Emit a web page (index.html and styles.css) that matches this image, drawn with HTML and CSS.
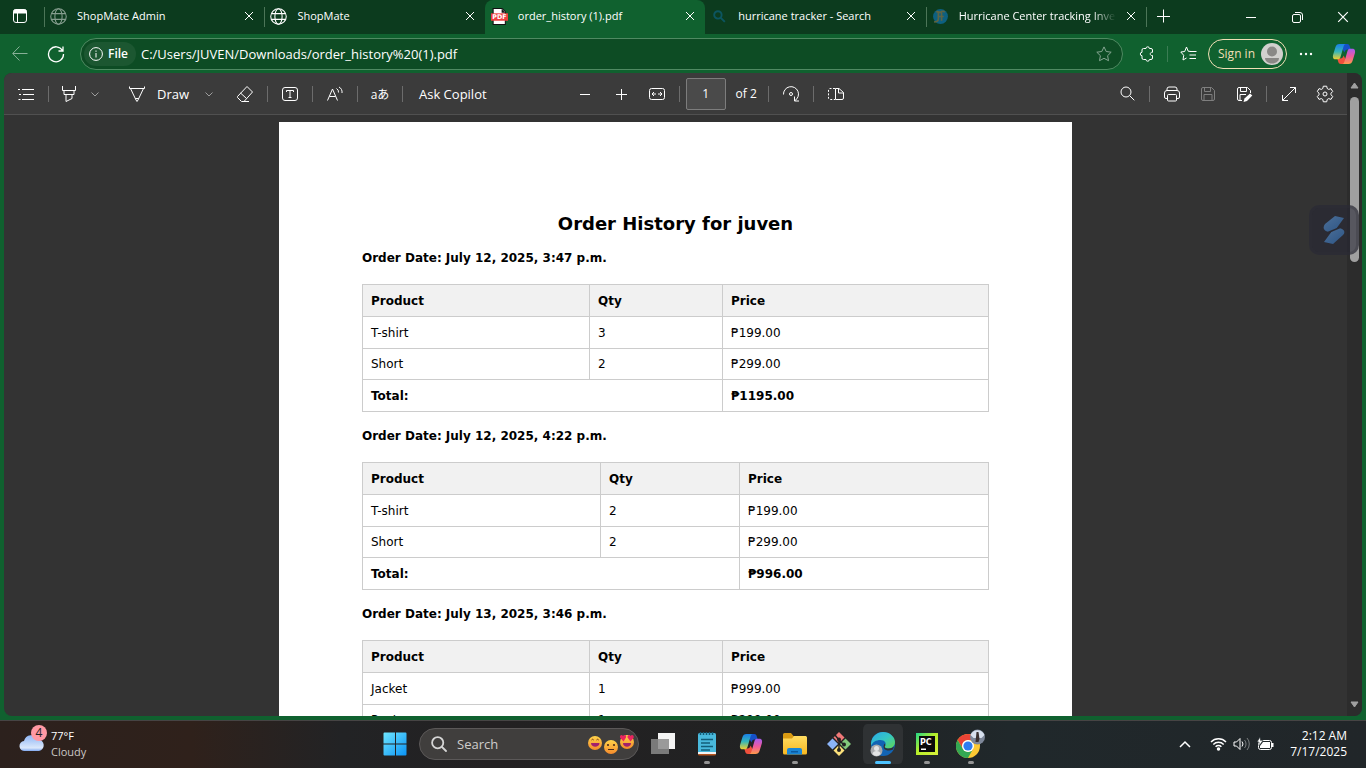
FILE: index.html
```html
<!DOCTYPE html>
<html lang="en">
<head>
<meta charset="utf-8">
<title>order_history (1).pdf</title>
<link rel="stylesheet" href="styles.css">
</head>
<body>
<svg class="defs" aria-hidden="true">
  <defs>
    <symbol id="x" viewBox="0 0 10 10"><path d="M1 1l8 8M9 1l-8 8"/></symbol>
    <symbol id="chev" viewBox="0 0 8 8"><path d="M.5 2.500L4 6l3.500-3.500"/></symbol>
    <symbol id="globe" viewBox="0 0 16 16"><circle cx="8" cy="8" r="7.300"/><ellipse cx="8" cy="8" rx="3.400" ry="7.300"/><path d="M1.500 5.300h13M1.500 10.700h13"/></symbol>
    <linearGradient id="cpA" x1="0" y1="0" x2="0" y2="1"><stop offset="0" stop-color="#1a7fe8"/><stop offset=".5" stop-color="#35b6b8"/><stop offset="1" stop-color="#f2cf2e"/></linearGradient>
    <linearGradient id="cpB" x1="0" y1="0" x2="0" y2="1"><stop offset="0" stop-color="#a65cf0"/><stop offset=".5" stop-color="#ee5a9c"/><stop offset="1" stop-color="#ff9a4a"/></linearGradient>
    <symbol id="copilot" viewBox="0 0 24 24">
      <path fill="#1550c8" d="M8 2h7c2 0 2.500 1 3 3l.7 2.500h-3c-2 0-2.700 1-3.300 3L10 6z"/>
      <path fill="#f0503c" d="M16 22H9c-2 0-2.500-1-3-3l-.7-2.500h3c2 0 2.700-1 3.300-3L14 18z"/>
      <path fill="url(#cpA)" d="M7.500 2H14c-1.500 0-2 1-2.600 3L8.500 15c-.5 1.700-1.200 2.300-3 2.300H3.500C1 17.300.5 15 1.200 12.500L3.500 5C4.200 3 5.200 2 7.500 2z"/>
      <path fill="url(#cpB)" d="M16.500 22H10c1.500 0 2-1 2.600-3l2.900-10c.5-1.700 1.200-2.300 3-2.300h2c2.500 0 3 2.300 2.300 4.800L20.500 19c-.7 2-1.700 3-4 3z"/>
    </symbol>
    <linearGradient id="winG" x1="0" y1="0" x2="1" y2="1"><stop offset="0" stop-color="#6fe6ff"/><stop offset="1" stop-color="#0a93f5"/></linearGradient>
    <linearGradient id="edgeA" x1="0" y1="0" x2="1" y2="1"><stop offset="0" stop-color="#2aa8e8"/><stop offset=".5" stop-color="#35c6c4"/><stop offset="1" stop-color="#62d84e"/></linearGradient>
    <linearGradient id="cloudG" x1="0" y1="0" x2="0" y2="1"><stop offset="0" stop-color="#8fb6f5"/><stop offset=".8" stop-color="#dbe8fb"/><stop offset="1" stop-color="#7fa8f0"/></linearGradient>
    <linearGradient id="folderG" x1="0" y1="0" x2="0" y2="1"><stop offset="0" stop-color="#ffdc62"/><stop offset="1" stop-color="#f8b820"/></linearGradient>
    <linearGradient id="pcG" x1="0" y1="0" x2="1" y2="1"><stop offset="0" stop-color="#21d789"/><stop offset=".45" stop-color="#b6ee2a"/><stop offset="1" stop-color="#d8f03a"/></linearGradient>
    <linearGradient id="faceG" x1="0" y1="0" x2="0" y2="1"><stop offset="0" stop-color="#ffd34a"/><stop offset="1" stop-color="#f58a2c"/></linearGradient>
    <linearGradient id="snG" x1="0" y1="0" x2="1" y2="1"><stop offset="0" stop-color="#4d7099"/><stop offset="1" stop-color="#2c5484"/></linearGradient>
  </defs>
</svg>

<header class="tabstrip">
  <button class="tab-actions" aria-label="Tab actions"><svg class="ico" width="16" height="16" viewBox="0 0 16 16"><rect x="1.500" y="1.500" width="13" height="13" rx="2.500"/><path fill="currentColor" d="M2 2h12v3H2z"/><path d="M5.500 5v9"/></svg></button>
  <nav class="tabs">
    <div class="tab"><svg class="ico fav dim" viewBox="0 0 16 16"><use href="#globe"/></svg><a href="#">ShopMate Admin</a><button class="close" aria-label="Close tab"><svg class="ico" width="10" height="10"><use href="#x"/></svg></button></div>
    <div class="tab"><svg class="ico fav" viewBox="0 0 16 16"><use href="#globe"/></svg><a href="#">ShopMate</a><button class="close" aria-label="Close tab"><svg class="ico" width="10" height="10"><use href="#x"/></svg></button></div>
    <div class="tab active"><svg class="fav" viewBox="0 0 16 16"><path fill="#fff" stroke="#111" d="M2 .5h8.500l3 3v12H2z"/><path fill="#111" d="M10 1l3.500 3.500H10z"/><path fill="#ee3f3f" d="M0 5h16v7H0z"/><text x="8" y="10.500" class="pdf-label">PDF</text></svg><a href="#">order_history (1).pdf</a><button class="close" aria-label="Close tab"><svg class="ico" width="10" height="10"><use href="#x"/></svg></button></div>
    <div class="tab"><svg class="fav" viewBox="0 0 16 16"><g fill="none" stroke="#0c5560" stroke-width="1.800"><circle cx="6.500" cy="6.500" r="3.500"/><path d="M9 9l4 4"/></g></svg><a href="#">hurricane tracker - Search</a><button class="close" aria-label="Close tab"><svg class="ico" width="10" height="10"><use href="#x"/></svg></button></div>
    <div class="tab"><svg class="fav" viewBox="0 0 16 16"><circle cx="8" cy="8" r="7" fill="#0d6080"/><path d="M4 4c2-2 3 1 4 0s3-1 4 0M6 4v6c0 3-3 3-4 3M9 4v8M6 8h5" fill="none" stroke="#5d6444" stroke-width="1.600"/></svg><a href="#" class="fade">Hurricane Center tracking Inve</a><button class="close" aria-label="Close tab"><svg class="ico" width="10" height="10"><use href="#x"/></svg></button></div>
  </nav>
  <button class="newtab" aria-label="New tab"><svg class="ico" width="14" height="14" viewBox="0 0 14 14"><path d="M7.500 .5v13M1 7.500h13"/></svg></button>
  <div class="winctl">
    <button aria-label="Minimize"><svg class="ico" width="10" height="10" viewBox="0 0 10 10"><path d="M0 5.500h10"/></svg></button>
    <button aria-label="Restore"><svg class="ico" width="11" height="11" viewBox="0 0 11 11"><rect x=".5" y="2.500" width="8" height="8" rx="1.500"/><path d="M3 .5h5a2.500 2.500 0 0 1 2.500 2.500v5"/></svg></button>
    <button aria-label="Close"><svg class="ico" width="12" height="12"><use href="#x"/></svg></button>
  </div>
</header>

<div class="addressbar">
  <button class="nav-btn dim" aria-label="Back"><svg class="ico" width="16" height="16" viewBox="0 0 16 16"><path d="M15.500 7.500H1M7.500 .5L.7 7.500l6.800 7"/></svg></button>
  <button class="nav-btn" aria-label="Refresh"><svg class="ico thick" width="18" height="18" viewBox="0 0 18 18"><path d="M15.500 5.500A7.500 7.500 0 1 0 16.500 9M16 1.500v4.500h-4.500"/></svg></button>
  <div class="omnibox">
    <button class="chip"><svg class="ico" width="14" height="14" viewBox="0 0 14 14"><circle cx="7" cy="7" r="6.400"/><path d="M7 6v4.500M7 3.500v1.300"/></svg>File</button>
    <input class="url" aria-label="Address" value="C:/Users/JUVEN/Downloads/order_history%20(1).pdf">
    <button class="star dim" aria-label="Add to favorites"><svg class="ico" width="16" height="16" viewBox="0 0 16 16"><path d="M8 .9l2.200 4.600 5 .7-3.600 3.500.9 5L8 12.300 3.500 14.700l.9-5L.8 6.200l5-.7z"/></svg></button>
  </div>
  <button class="nav-btn" aria-label="Extensions"><svg class="ico" width="16" height="16" viewBox="0 0 16 16"><path d="M4.500 2.500H7a1.700 1.700 0 0 1 3.400 0H12a1.500 1.500 0 0 1 1.500 1.500v2.300c-3-.5-3 3.700 0 3.200V12a1.500 1.500 0 0 1-1.500 1.500h-1.600a1.700 1.700 0 0 1-3.400 0H4.500A1.500 1.500 0 0 1 3 12V9.700a1.700 1.700 0 0 1 0-3.400V4a1.500 1.500 0 0 1 1.500-1.500z"/></svg></button>
  <span class="vsep"></span>
  <button class="nav-btn" aria-label="Favorites"><svg class="ico" width="17" height="16" viewBox="0 0 17 16"><path d="M11 5.500L8.200 5.200 6.500 1 4.700 5.500.8 6 3.700 9.300 3 14l3.500-2M10 5.500h6.500M9.500 9H16M9.500 12.500H16"/></svg></button>
  <button class="signin">Sign in<svg width="22" height="22" viewBox="0 0 22 22"><circle cx="11" cy="11" r="11" fill="#d2d0ce"/><circle cx="11" cy="8.500" r="5" fill="#8a8886"/><path fill="#8a8886" d="M4 15h14c0 3-3 5.500-7 5.500S4 18 4 15z"/></svg></button>
  <button class="nav-btn more" aria-label="More"><svg width="14" height="4" viewBox="0 0 14 4" fill="#fff"><circle cx="2" cy="2" r="1.200"/><circle cx="7" cy="2" r="1.200"/><circle cx="12" cy="2" r="1.200"/></svg></button>
  <button class="copilot-btn" aria-label="Copilot"><svg width="24" height="24"><use href="#copilot"/></svg></button>
</div>

<main class="viewer">
  <div class="pane">
    <div class="toolbar">
      <button class="tool" aria-label="Contents"><svg class="ico" width="18" height="12" viewBox="0 0 18 12"><path d="M1 1.500h2M5 1.500h12M2 6.500h2M6 6.500h11M5 11.500h12M1.500 11.500h2"/></svg></button>
      <span class="sep"></span>
      <button class="tool combo" aria-label="Highlight"><svg class="ico" width="16" height="18" viewBox="0 0 16 18"><path d="M1.500 1v4.500h13V1M3 5.500v4h10v-4M5 9.500v7l6-3v-4"/></svg><svg class="ico dim" width="8" height="8"><use href="#chev"/></svg></button>
      <button class="tool draw"><svg class="ico" width="18" height="18" viewBox="0 0 18 18"><path d="M1.500 1.500v2h15v-2M2.500 3.500L8 15l1 1.500 1-1.500 5.500-11.500M7.300 13.500h3.400"/></svg><span>Draw</span><svg class="ico dim" width="8" height="8"><use href="#chev"/></svg></button>
      <button class="tool" aria-label="Erase"><svg class="ico" width="18" height="18" viewBox="0 0 18 18"><path d="M11 1.500L16.500 7 8 16.500H5.500l-4-4v-1zM4.500 8l6 5.500M8 16.500h5"/></svg></button>
      <span class="sep"></span>
      <button class="tool" aria-label="Add text"><svg class="ico" width="18" height="16" viewBox="0 0 18 16"><rect x="1.500" y="1.500" width="15" height="13" rx="2.500"/><path d="M5.500 6V4.500h7V6M9 4.500v7M7.500 11.500h3"/></svg></button>
      <span class="sep"></span>
      <button class="tool" aria-label="Read aloud"><svg class="ico" width="18" height="16" viewBox="0 0 18 16"><path d="M1.500 14.500L6.500 3l5 11.500M3.500 10.500h6M10.500 2.500a4 4 0 0 1 2 4M13 1a6 6 0 0 1 3 6"/></svg></button>
      <span class="sep"></span>
      <button class="tool translate" aria-label="Translate">aあ</button>
      <span class="sep"></span>
      <button class="tool ask">Ask Copilot</button>
      <div class="middle">
        <button class="tool" aria-label="Zoom out"><svg class="ico" width="12" height="12" viewBox="0 0 12 12"><path d="M1 6.500h10"/></svg></button>
        <button class="tool" aria-label="Zoom in"><svg class="ico" width="12" height="12" viewBox="0 0 12 12"><path d="M6.500 1v11M1 6.500h11"/></svg></button>
        <button class="tool" aria-label="Fit to width"><svg class="ico" width="18" height="14" viewBox="0 0 18 14"><rect x="1.500" y="1.500" width="15" height="11" rx="2"/><path d="M4 7h4M10 7h4M6 5L4 7l2 2M12 5l2 2-2 2"/></svg></button>
        <span class="sep"></span>
        <label class="page-no"><input value="1" aria-label="Page number"><span>of 2</span></label>
        <span class="sep"></span>
        <button class="tool" aria-label="Rotate"><svg class="ico" width="18" height="18" viewBox="0 0 18 18"><path d="M1.500 9.500A7.500 7.500 0 1 1 13 15.500M12.500 11.500v4.500h4.500"/><circle cx="9" cy="9" r="1.500"/></svg></button>
        <span class="sep"></span>
        <button class="tool" aria-label="Page view"><svg class="ico" width="18" height="14" viewBox="0 0 18 14"><path d="M8.500 1.500H12l4.500 4v5.500a1.500 1.500 0 0 1-1.500 1.500H8.500zM11.500 1.500v4.500h5"/><path stroke-dasharray="2 1.500" d="M8 1.500H3A1.500 1.500 0 0 0 1.500 3v8A1.500 1.500 0 0 0 3 12.500h5"/></svg></button>
      </div>
      <div class="right">
        <button class="tool" aria-label="Find"><svg class="ico" width="15" height="15" viewBox="0 0 15 15"><circle cx="6" cy="6" r="5"/><path d="M9.700 9.700l4.600 4.600"/></svg></button>
        <span class="sep"></span>
        <button class="tool" aria-label="Print"><svg class="ico" width="18" height="16" viewBox="0 0 18 16"><path d="M4 4.500V3a2 2 0 0 1 2-2h6a2 2 0 0 1 2 2v1.500M4 12.500H3A1.500 1.500 0 0 1 1.500 11V7A2.500 2.500 0 0 1 4 4.500h10A2.500 2.500 0 0 1 16.500 7v4a1.500 1.500 0 0 1-1.500 1.500h-1"/><rect x="4.500" y="8.500" width="9" height="6.500" rx="1"/></svg></button>
        <button class="tool faint" aria-label="Save"><svg class="ico" width="16" height="16" viewBox="0 0 16 16"><path d="M3 1.500h8.500L14.500 4.500V13a1.500 1.500 0 0 1-1.500 1.500H3A1.500 1.500 0 0 1 1.500 13V3A1.500 1.500 0 0 1 3 1.500zM4.500 1.500v4h6v-4M4 14.500v-6h8v6"/></svg></button>
        <button class="tool" aria-label="Save as"><svg class="ico" width="17" height="16" viewBox="0 0 17 16"><path d="M6 14.500H3A1.500 1.500 0 0 1 1.500 13V3A1.500 1.500 0 0 1 3 1.500h8.500l3 3V7M4.500 1.500v4h6v-4M4 14.500v-6h6"/><path fill="currentColor" stroke="none" d="M14 7.500l2.300 2-5.300 5.500-3.500 1 1-3.500z"/></svg></button>
        <span class="sep"></span>
        <button class="tool" aria-label="Full screen"><svg class="ico" width="16" height="16" viewBox="0 0 16 16"><path d="M1.500 14.500l13-13M9 1.500h5.500V7M1.500 9v5.500H7"/></svg></button>
        <button class="tool" aria-label="Settings"><svg class="ico" width="18" height="18" viewBox="0 0 18 18"><path d="M7.300 1.200h3.400l.5 2.300 1.500.9 2.300-.8 1.700 2.900L15 8.200v1.600l1.700 1.700-1.700 2.900-2.300-.8-1.500.9-.5 2.300H7.300l-.5-2.300-1.500-.9-2.300.8-1.700-2.900L3 9.800V8.200L1.300 6.500 3 3.600l2.300.8 1.500-.9z"/><circle cx="9" cy="9" r="2"/></svg></button>
      </div>
    </div>
    <div class="canvas">
      <article class="page">
        <h1>Order History for juven</h1>
        <h2>Order Date: July 12, 2025, 3:47 p.m.</h2>
        <table>
          <colgroup><col class="c-product"><col class="c-qty"><col></colgroup>
          <thead><tr><th>Product</th><th>Qty</th><th>Price</th></tr></thead>
          <tbody>
            <tr><td>T-shirt</td><td>3</td><td>₱199.00</td></tr>
            <tr><td>Short</td><td>2</td><td>₱299.00</td></tr>
            <tr class="total"><td colspan="2">Total:</td><td>₱1195.00</td></tr>
          </tbody>
        </table>
        <h2>Order Date: July 12, 2025, 4:22 p.m.</h2>
        <table>
          <colgroup><col class="c-product-wide"><col class="c-qty-wide"><col></colgroup>
          <thead><tr><th>Product</th><th>Qty</th><th>Price</th></tr></thead>
          <tbody>
            <tr><td>T-shirt</td><td>2</td><td>₱199.00</td></tr>
            <tr><td>Short</td><td>2</td><td>₱299.00</td></tr>
            <tr class="total"><td colspan="2">Total:</td><td>₱996.00</td></tr>
          </tbody>
        </table>
        <h2>Order Date: July 13, 2025, 3:46 p.m.</h2>
        <table>
          <colgroup><col class="c-product"><col class="c-qty"><col></colgroup>
          <thead><tr><th>Product</th><th>Qty</th><th>Price</th></tr></thead>
          <tbody>
            <tr><td>Jacket</td><td>1</td><td>₱999.00</td></tr>
            <tr><td>Pants</td><td>1</td><td>₱299.00</td></tr>
          </tbody>
        </table>
      </article>
    </div>
  </div>
  <div class="scroll">
    <svg width="9" height="7" viewBox="0 0 9 7"><path fill="#a0a0a0" stroke="#a0a0a0" stroke-linejoin="round" d="M4.500 1l3.500 5H1z"/></svg>
    <div class="track"><div class="thumb"></div></div>
    <svg width="9" height="7" viewBox="0 0 9 7"><path fill="#a0a0a0" stroke="#a0a0a0" stroke-linejoin="round" d="M4.500 6L1 1h7z"/></svg>
  </div>
  <button class="sidekick" aria-label="Assistant"><svg width="22" height="30" viewBox="0 0 22 30"><path fill="url(#snG)" d="M12 1l9 2-8 11c-1 2-3 3-5 3-7 0-9-4-6-8z"/><path fill="url(#snG)" d="M10 29l-9-2 8-11c1-2 3-3 5-3 7 0 9 4 6 7z"/><path d="M4 18L18 12" stroke="#292a33" stroke-width="1.500"/></svg></button>
</main>

<footer class="taskbar">
  <button class="weather">
    <span class="cloud"><svg width="26" height="18" viewBox="0 0 26 18"><path fill="url(#cloudG)" d="M6 17a5 5 0 0 1-1-10 7.500 7.500 0 0 1 14-1.500A5.800 5.800 0 0 1 20 17z"/></svg><b>4</b></span>
    <span class="wtext"><strong>77°F</strong><span>Cloudy</span></span>
  </button>
  <div class="apps">
    <button class="app" aria-label="Start"><svg width="24" height="24" viewBox="0 0 24 24"><path fill="url(#winG)" d="M1.500.5H12v11H.5v-10a1 1 0 0 1 1-1zM13 .5h9.500a1 1 0 0 1 1 1v10H13zM.5 12.500H12v11H1.500a1 1 0 0 1-1-1zM13 12.500h10.500v10a1 1 0 0 1-1 1H13z"/></svg></button>
    <label class="search"><svg width="16" height="16" viewBox="0 0 16 16" fill="none" stroke="#d5d5d5" stroke-width="1.800"><circle cx="6.700" cy="6.700" r="5.600"/><path stroke-linecap="round" d="M11 11l4 4"/></svg><input placeholder="Search" aria-label="Search">
      <svg width="46" height="20" viewBox="0 0 46 20">
        <circle cx="7" cy="9" r="7" fill="url(#faceG)"/><path fill="#a3206c" d="M3 9h8.500c0 5-8.500 5-8.500 0z"/><path d="M3.500 6q1-1.500 2.200 0M8.500 6q1-1.500 2.200 0" stroke="#6b3518" fill="none"/>
        <circle cx="23" cy="13" r="7" fill="url(#faceG)"/><circle cx="20" cy="11" r="1.100" fill="#4a2a18"/><circle cx="26" cy="11" r="1.100" fill="#4a2a18"/><path d="M20 15.500h6" stroke="#4a2a18"/>
        <circle cx="39" cy="8" r="7" fill="url(#faceG)"/><path fill="#a3206c" d="M35 9h8c0 5-8 5-8 0z"/><path fill="#e9255f" d="M35.500 7.500L32 3.500c-.5-2.500 2-3.500 3-1.500 1.500-2 4-.5 3 1.500zM42.500 7.500L39.500 3.500c-.5-2 2-3.500 3-1.500 1.500-2 4-.5 3 2z"/>
      </svg></label>
    <button class="app" aria-label="Task view"><svg width="26" height="24" viewBox="0 0 26 24"><path fill="#f4f4f4" d="M8 1h17v16H8z"/><path fill="#8a8a8a" fill-opacity=".85" d="M1 7h18v15H1z"/></svg></button>
    <button class="app run" aria-label="Notepad"><svg width="24" height="24" viewBox="0 0 24 24"><rect x="3" y="1" width="18" height="22" rx="1.500" fill="#49b9dc"/><path fill="#f3f3f3" d="M3 20h18v2H3z"/><path fill="#b5541e" d="M3 22h18a1.500 1.500 0 0 1-1.500 1.500h-15A1.500 1.500 0 0 1 3 22z"/><path stroke="#125d78" stroke-width="1.500" d="M6 7.500h12M6 11h9M6 14.500h12M6 18h9M5.500 0v3M8.500 0v3M11.500 0v3M14.500 0v3M17.500 0v3"/></svg></button>
    <button class="app" aria-label="Copilot"><svg width="24" height="24"><use href="#copilot"/></svg></button>
    <button class="app run" aria-label="File Explorer"><svg width="26" height="24" viewBox="0 0 26 24"><path fill="#d99a12" d="M1 2.500A1.500 1.500 0 0 1 2.500 1H9l2.500 3H24v4H1z"/><path fill="url(#folderG)" d="M1 6.500h9l2-2.500h11.500A1.500 1.500 0 0 1 25 5.500V21a1.500 1.500 0 0 1-1.500 1.500h-21A1.500 1.500 0 0 1 1 21z"/><path fill="#1a86d6" d="M5 22.500V18a2 2 0 0 1 2-2h11a2 2 0 0 1 2 2v4.500z"/><path fill="#0b5aa0" d="M9 19h7v1.500H9z"/></svg></button>
    <button class="app" aria-label="Git"><svg width="26" height="26" viewBox="0 0 26 26"><path fill="#f07878" d="M13 1l5.500 5.500L13 12 7.500 6.500z"/><path fill="#8bb4f8" d="M6.500 7.500L12 13l-5.500 5.500L1 13z"/><path fill="#82c97c" d="M19.500 7.500L25 13l-5.500 5.500L14 13z"/><path fill="#fbe07a" d="M13 14l5.500 5.500L13 25l-5.500-5.500z"/><path d="M9 4l4 5v10M13 9l5 5" fill="none" stroke="#222" stroke-width="1.500"/><circle cx="13" cy="8.500" r="2" fill="#222"/><circle cx="18" cy="13.500" r="2" fill="#222"/><circle cx="13" cy="19" r="2" fill="#222"/></svg></button>
    <button class="app run current" aria-label="Edge"><svg width="26" height="26" viewBox="0 0 26 26"><circle cx="13" cy="13" r="12" fill="#1264b4"/><path fill="url(#edgeA)" d="M1 12C2 5 7 1 13 1c7 0 12 5 12 10 0 4-3 6.500-6.500 6.500-3 0-4.500-1.200-3.500-2.500 2-3-.5-6-4.500-6C6 9 2.500 11 1 15z"/><path fill="#2f3234" d="M15 15c-1 1.300.5 2.500 3.500 2.500 2.500 0 4-.8 5.500-2l-1 3c-3 1.500-7 1.500-9-1-1-2 0-4 .5-5 .8 1 1 2 .5 2.500z"/><circle cx="6.500" cy="19.500" r="6" fill="#a9aaac"/><circle cx="6.500" cy="17.500" r="2.500" fill="#e4e4e4"/><path fill="#e4e4e4" d="M2.500 23c0-4 8-4 8 0-2 2.500-6 2.500-8 0z"/></svg></button>
    <button class="app run" aria-label="PyCharm"><svg width="24" height="24" viewBox="0 0 24 24"><path fill="url(#pcG)" d="M1 1h22v22H1z"/><path fill="#0a0a0a" d="M4 4h16v16H4z"/><text x="5" y="12.500" class="pc-label">PC</text><path fill="#fff" d="M6 16.500h5v1.500H6z"/></svg></button>
    <button class="app run" aria-label="Chrome"><svg width="30" height="30" viewBox="0 0 30 30"><circle cx="12" cy="17" r="12" fill="#fcc934"/><path fill="#ea4335" d="M1.600 11A12 12 0 0 1 22.400 11H12a6 6 0 0 0-5 9z"/><path fill="#34a853" d="M1.600 11A12 12 0 0 0 12 29l5-9a6 6 0 0 1-10 0z"/><circle cx="12" cy="17" r="6" fill="#fff"/><circle cx="12" cy="17" r="4.600" fill="#2f7df0"/><circle cx="21.500" cy="8" r="7.500" fill="#7d8799"/><path fill="#d7e0ee" d="M14.500 6a7.500 7.500 0 0 1 14 0l-3 3h-8z"/><path fill="#3a3030" d="M20.500 3h2l1 7-1 3h-3z"/></svg></button>
  </div>
  <div class="tray">
    <button aria-label="Hidden icons"><svg class="ico heavy" width="12" height="8" viewBox="0 0 12 8"><path d="M1 7l5-5 5 5"/></svg></button>
    <button class="status" aria-label="Network, volume, battery">
      <svg class="ico heavy" width="17" height="14" viewBox="0 0 17 14"><path d="M1 5a10.500 10.500 0 0 1 15 0M3.300 7.500a7.300 7.300 0 0 1 10.400 0M5.600 9.700a4 4 0 0 1 5.800 0"/><circle cx="8.500" cy="12" r="1" fill="currentColor"/></svg>
      <svg class="ico" width="18" height="14" viewBox="0 0 18 14"><path d="M1 5h2.500L7 1.500v11L3.500 9H1zM9 4.500a4 4 0 0 1 0 5"/><path opacity=".4" d="M11.500 3a6 6 0 0 1 0 8M14 1a9 9 0 0 1 0 12"/></svg>
      <svg class="ico" width="17" height="14" viewBox="0 0 17 14"><rect x="1.500" y="3.500" width="13" height="9" rx="2"/><path fill="currentColor" stroke="none" d="M6 5h7v6H3V9zM15 6h1.500v4H15z"/><path fill="#fff" stroke="#20282b" stroke-width=".6" d="M3 0L0 5h2v4l4-5.500H3.500z"/></svg>
    </button>
    <time class="clock"><span>2:12 AM</span><span>7/17/2025</span></time>
  </div>
</footer>
</body>
</html>
```
FILE: styles.css
```css
* { box-sizing: border-box; }

body {
  margin: 0;
  height: 100vh;
  display: flex;
  flex-direction: column;
  overflow: hidden;
  background: #10612f;
  color: #fff;
  font: 12px/16px "Open Sans", "Noto Sans", sans-serif;
}

button {
  display: flex;
  align-items: center;
  justify-content: center;
  padding: 0;
  border: 0;
  background: none;
  color: inherit;
  font: inherit;
}

input { font: inherit; color: inherit; border: 0; background: none; min-width: 0; padding: 0; outline: 0; }
a { color: inherit; text-decoration: none; }
svg { flex: none; }
.defs { position: absolute; width: 0; height: 0; }
.ico { fill: none; stroke: currentColor; stroke-width: 1; }
.ico.thick { stroke-width: 1.3; }
.ico.heavy { stroke-width: 1.5; }
.dim { opacity: .5; }
.faint { opacity: .35; }

/* Tab strip */
.tabstrip { display: flex; flex: none; height: 34px; background: #0c3b1e; }
.tab-actions { width: 40px; margin-right: 4px; padding-bottom: 2px; }
.tabs { display: flex; flex: 0 1 1102px; min-width: 0; }
.tab {
  display: flex;
  flex: 1 1 220px;
  align-items: center;
  min-width: 0;
  gap: 10px;
  padding: 0 10px 2px 6px;
  background: linear-gradient(#4c7558, #4c7558) 0 7px / 1px 20px no-repeat;
}
.tab.active { background: #10612f; border-radius: 8px 8px 0 0; }
.tab.active + .tab { background: none; }
.tab a { flex: 1; min-width: 0; white-space: nowrap; overflow: hidden; font-size: 11px; }
.tab a.fade { mask-image: linear-gradient(90deg, #000 85%, transparent); }
.fav { width: 17px; height: 17px; }
.close { width: 10px; height: 16px; }
.pdf-label { fill: #fff; font: bold 6px "DejaVu Sans", sans-serif; text-anchor: middle; }
.newtab { width: 34px; padding-bottom: 2px; background: linear-gradient(#4c7558, #4c7558) 0 7px / 1px 20px no-repeat; }
.winctl { display: flex; margin-left: auto; }
.winctl button { width: 46px; }

/* Address bar */
.addressbar { display: flex; flex: none; align-items: center; height: 39px; padding: 0 4px 0 2px; }
.nav-btn { width: 36px; height: 32px; }
.omnibox {
  display: flex;
  flex: 1;
  align-items: center;
  height: 32px;
  min-width: 0;
  margin: 0 6px;
  padding: 0 10px 0 3px;
  border: 1px solid #4f8a62;
  border-radius: 16px;
  background: #0d4c24;
}
.chip { gap: 5px; height: 24px; padding: 0 8px 0 5px; border-radius: 12px; background: #1c5731; font-weight: 600; }
.url { flex: 1; margin-left: 5px; font-size: 13px; }
.star { width: 16px; }
.vsep { width: 1px; height: 16px; margin: 0 2px; background: #3b7d54; }
.signin {
  gap: 6px;
  height: 30px;
  margin: 0 2px;
  padding: 0 3px 0 9px;
  border: 1px solid #f0dfb6;
  border-radius: 15px;
  color: #f0dfb6;
  font-weight: 500;
}
.nav-btn.more { width: 34px; }
.copilot-btn { width: 36px; margin-left: 3px; }

/* PDF viewer */
.viewer {
  position: relative;
  display: flex;
  flex: 1;
  min-height: 0;
  margin: 0 4px 4px;
  overflow: hidden;
  border-radius: 8px;
  background: #333;
}
.pane { display: flex; flex: 1; flex-direction: column; min-width: 0; }
.toolbar {
  display: flex;
  flex: none;
  align-items: center;
  height: 42px;
  padding: 0 4px;
  border-bottom: 1px solid #505050;
  background: #3b3b3b;
  font-size: 13px;
}
.tool { width: 36px; height: 32px; }
.tool.combo { width: 60px; gap: 14px; justify-content: flex-start; padding-left: 8px; }
.tool.draw { width: 114px; gap: 11px; justify-content: flex-start; padding-left: 15px; }
.tool.draw span { margin-right: 5px; }
.tool.ask { width: auto; padding: 0 12px; }
.tool.translate { font: 12px "Open Sans", "Noto Sans CJK JP", sans-serif; }
.sep { width: 1px; height: 16px; margin: 0 4px; background: #6c6c6c; }
.middle, .right { display: flex; align-items: center; }
.middle { margin-left: 68px; }
.right { margin-left: auto; }
.page-no { display: flex; align-items: center; gap: 10px; padding: 0 7px 0 2px; font-size: 12px; }
.page-no input { width: 40px; height: 32px; border: 1px solid #7d7d7d; border-radius: 2px; background: #4a4a4a; text-align: center; }
.canvas { display: flex; flex: 1; justify-content: center; min-height: 0; overflow: hidden; padding-top: 7px; }
.page {
  width: 793px;
  height: max-content;
  min-height: 1122px;
  padding: 90px 83px;
  background: #fff;
  color: #000;
  font: 12px/16px "DejaVu Sans", sans-serif;
}
.page h1 { margin: 0 0 14px; font-size: 18px; line-height: 24px; text-align: center; }
.page h2 { margin: 0 0 18px; font-size: 12px; line-height: 16px; }
.page table { width: 100%; margin-bottom: 16px; border-collapse: collapse; table-layout: fixed; }
.page th, .page td { height: 32px; padding: 0 8px; border: 1px solid #ccc; text-align: left; }
.page th { background: #f1f1f1; }
.page tbody tr:nth-child(2) td { height: 31px; }
.page .total td { font-weight: bold; }
.c-product { width: 227px; }
.c-qty { width: 133px; }
.c-product-wide { width: 238px; }
.c-qty-wide { width: 139px; }

.scroll { display: flex; flex: none; flex-direction: column; align-items: center; width: 15px; padding: 9px 0 8px; background: #2c2c2c; }
.track { flex: 1; padding-top: 8px; }
.thumb { width: 9px; height: 165px; border-radius: 5px; background: #a0a0a0; }
.sidekick {
  position: absolute;
  top: 132px;
  right: 3px;
  width: 50px;
  height: 50px;
  border: 3px solid rgba(45, 45, 56, .3);
  border-radius: 10px;
  background: rgba(38, 39, 52, .6);
}

/* Taskbar */
.taskbar {
  display: grid;
  flex: none;
  grid-template-columns: 1fr auto 1fr;
  height: 48px;
  box-shadow: inset 0 1px #464444;
  background: linear-gradient(90deg, #2c211d, #2f211b 14%, #222325 25%, #232122 36%, #212223 60%, #20282b 74%, #212629);
}
.weather { justify-self: start; align-self: center; gap: 6px; padding-left: 19px; }
.cloud { position: relative; padding-bottom: 2px; display: flex; }
.cloud b {
  position: absolute;
  top: -9px;
  right: -2px;
  width: 16px;
  height: 16px;
  border-radius: 8px;
  background: #ff99a4;
  color: #222;
  font-weight: 400;
  text-align: center;
}
.wtext { display: flex; flex-direction: column; text-align: left; font-size: 11px; color: #cbc7c5; }
.wtext strong { font-weight: 500; color: #fff; }
.apps { display: flex; align-items: center; }
.app { position: relative; width: 44px; height: 40px; }
.app.current { padding: 0 2px; border-radius: 6px; background: #2f3234 content-box; }
.app.run::after { content: ""; position: absolute; bottom: 0; left: 19px; width: 6px; height: 3px; border-radius: 2px; background: #949494; }
.app.current::after { left: 14px; width: 16px; background: #4cc2ff; }
.search {
  display: flex;
  align-items: center;
  gap: 10px;
  width: 220px;
  height: 32px;
  margin: 0 2px;
  padding: 0 4px 0 11px;
  border: 1px solid #5b5858;
  border-radius: 16px;
  background: #403e3d;
}
.search input { flex: 1; width: 60px; font-size: 13px; }
.search input::placeholder { color: #cfcdcc; opacity: 1; }
.tray { display: flex; align-items: center; justify-content: flex-end; padding-right: 19px; }
.status { gap: 6px; margin: 0 16px 0 19px; }
.clock { display: flex; flex-direction: column; text-align: right; }
.pc-label { fill: #fff; font: bold 8px "DejaVu Sans", sans-serif; }
```
